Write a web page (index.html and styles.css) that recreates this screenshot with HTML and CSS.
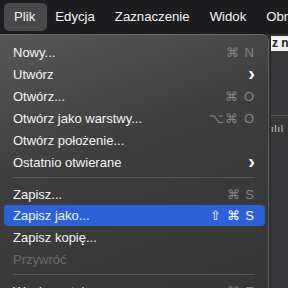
FILE: index.html
```html
<!DOCTYPE html>
<html lang="pl">
<head>
    <meta charset="UTF-8">
    <title>Plik</title>
    <link rel="stylesheet" href="styles.css">
</head>
<body>
    <div class="menubar">
        <span class="top-item active">Plik</span>
        <span class="top-item">Edycja</span>
        <span class="top-item">Zaznaczenie</span>
        <span class="top-item">Widok</span>
        <span class="top-item">Obraz</span>
    </div>

    <div class="stage">
        <div class="menu">
            <div class="row"><span>Nowy...</span><span class="key">⌘ N</span></div>
            <div class="row"><span>Utwórz</span><span class="chev">›</span></div>
            <div class="row"><span>Otwórz...</span><span class="key">⌘ O</span></div>
            <div class="row"><span>Otwórz jako warstwy...</span><span class="key">⌥⌘ O</span></div>
            <div class="row"><span>Otwórz położenie...</span></div>
            <div class="row"><span>Ostatnio otwierane</span><span class="chev">›</span></div>
            <div class="sep"></div>
            <div class="row"><span>Zapisz...</span><span class="key">⌘ S</span></div>
            <div class="row selected"><span>Zapisz jako...</span><span class="key">⇧ ⌘ S</span></div>
            <div class="row"><span>Zapisz kopię...</span></div>
            <div class="row disabled"><span>Przywróć</span></div>
            <div class="sep"></div>
            <div class="row"><span>Wyeksportuj</span><span class="key">⌘ E</span></div>
        </div>

        <div class="window">
            <div class="win-title">z n</div>
            <div class="win-body">
                <div class="ruler"></div>
                <div class="wave">ılıl</div>
            </div>
        </div>
    </div>
</body>
</html>
```

FILE: styles.css
```css
body {
    margin: 0;
    width: 288px;
    height: 288px;
    overflow: hidden;
    background-color: #333335;
    font-family: "Liberation Sans", Arial, sans-serif;
    color: #f4f4f4;
}

.menubar {
    height: 34px;
    background-color: #1d1d1f;
    display: flex;
    align-items: center;
    padding-left: 4px;
    font-size: 13.2px;
    white-space: nowrap;
}

.top-item {
    padding: 6px 10px 7px 10px;
    border-radius: 5px;
}

.top-item.active {
    background-color: #48484a;
    padding-right: 12px;
}

.top-item.active + .top-item {
    padding-left: 8px;
}

.stage {
    display: flex;
    height: 254px;
}

.menu {
    box-sizing: border-box;
    width: 269px;
    flex-shrink: 0;
    padding: 6px 3px 0 4px;
    background: linear-gradient(160deg, #575757 0%, #3d3d3d 45%, #363636 100%);
    border-top: 1px solid #666;
    border-top-right-radius: 8px;
    border-right: 1px solid #5c5c5c;
    font-size: 13px;
}

.row {
    height: 22px;
    display: flex;
    align-items: center;
    justify-content: space-between;
    padding: 0 10px 0 9px;
    border-radius: 4px;
    white-space: nowrap;
}

.row.selected {
    background-color: #2c62d6;
    height: 21px;
}

.row.disabled {
    color: #6c6c6c;
}

.key {
    color: #858585;
    font-size: 13px;
    letter-spacing: 1px;
}

.row.selected .key {
    color: #ffffff;
}

.chev {
    font-size: 20px;
    font-weight: 700;
    line-height: 1;
    margin-top: -3px;
}

.sep {
    height: 1px;
    background-color: #585858;
    margin: 4px 10px 5px 9px;
}

.window {
    flex: 1;
    min-width: 0;
    margin-left: 1px;
    border-left: 1px solid #2a2a2a;
    display: flex;
    flex-direction: column;
}

.win-title {
    height: 15px;
    margin-top: 2px;
    background-color: #f1f1f1;
    color: #222;
    font-size: 12px;
    font-weight: 700;
    padding-left: 1px;
    line-height: 15px;
    white-space: nowrap;
    overflow: hidden;
}

.win-body {
    flex: 1;
    background-color: #38383a;
}

.ruler {
    height: 1px;
    background-color: #5a5a5a;
    margin-top: 64px;
}

.wave {
    font-size: 9px;
    color: #dddddd;
    margin-top: 8px;
    letter-spacing: 1px;
}
```
